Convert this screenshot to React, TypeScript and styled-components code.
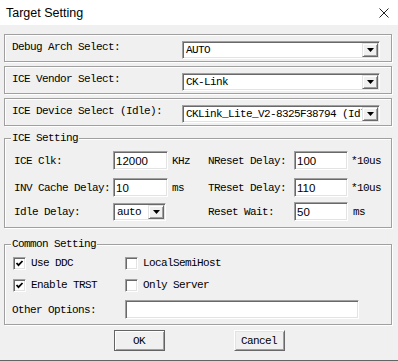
import React from 'react'
import styled, { createGlobalStyle, css } from 'styled-components'

const GlobalStyle = createGlobalStyle`
  html, body {
    margin: 0;
    padding: 0;
    background: #f0f0f0;
  }
  body {
    font-family: 'Liberation Mono', 'Noto Sans CJK SC', monospace;
    font-size: 11px;
    letter-spacing: -0.6px;
    color: #000;
  }
  * {
    box-sizing: border-box;
  }
`

const sunken = css`
  border: 1px solid;
  border-color: #a0a0a0 #fff #fff #a0a0a0;
  box-shadow: inset 1px 1px 0 #696969, inset -1px -1px 0 #e3e3e3;
  background: #fff;
`

const etched = css`
  border: 1px solid #a0a0a0;
  box-shadow: inset 1px 1px 0 #fff, 1px 1px 0 #fff;
`

const Window = styled.div`
  width: 398px;
  height: 361px;
  background: #f0f0f0;
  border-bottom: 1px solid #646464;
  display: flex;
  flex-direction: column;
  overflow: hidden;
`

const TitleBar = styled.div`
  height: 25px;
  flex: 0 0 25px;
  background: #fff;
  display: flex;
  align-items: center;
  justify-content: space-between;
  padding: 0 9px 0 6px;
`

const Title = styled.span`
  font-family: 'Liberation Sans', 'Noto Sans', sans-serif;
  font-size: 12.5px;
  letter-spacing: 0;
`

const Body = styled.div`
  padding: 9px 6px 0 4px;
  display: flex;
  flex-direction: column;
`

const SelectBox = styled.div`
  ${etched};
  height: 28px;
  margin-bottom: 4px;
  display: flex;
  align-items: flex-start;
  padding: 6px 0 0 7px;
`

const BoxLabel = styled.span`
  width: 170px;
  line-height: 13px;
  white-space: pre;
`

const Combo = styled.div<{ $width: number }>`
  ${sunken};
  width: ${p => p.$width}px;
  height: 18px;
  display: flex;
  align-items: stretch;
  padding: 1px;
`

const ComboText = styled.span`
  flex: 1;
  overflow: hidden;
  white-space: pre;
  line-height: 15px;
  padding-left: 2px;
`

const ComboButton = styled.span`
  flex: 0 0 16px;
  border: 1px solid;
  border-color: #e3e3e3 #696969 #696969 #e3e3e3;
  box-shadow: inset 1px 1px 0 #fff, inset -1px -1px 0 #a0a0a0;
  background: #f0f0f0;
  display: flex;
  align-items: center;
  justify-content: center;
`

const Group = styled.fieldset<{ $gap: number }>`
  ${etched};
  margin: ${p => p.$gap}px 0 0 0;
  padding: 0;
  min-width: 0;
`

const Legend = styled.legend`
  margin-left: 6px;
  padding: 0 1px;
  line-height: 13px;
  background: #f0f0f0;
`

const SettingGrid = styled.div`
  display: grid;
  grid-template-columns: 99px 55px 40px 86px 54px 1fr;
  grid-template-rows: 27px 24px 19px;
  margin: 6px 0 6px 9px;
`

const Cell = styled.div<{ $pad?: number }>`
  height: 19px;
  display: flex;
  align-items: center;
  padding-left: ${p => p.$pad ?? 0}px;
  white-space: pre;
`

const TextField = styled.input<{ $width?: number }>`
  ${sunken};
  width: ${p => (p.$width ? `${p.$width}px` : '100%')};
  height: 19px;
  margin: 0;
  padding: 0 0 0 2px;
  font-family: 'Liberation Sans', Arial, sans-serif;
  font-size: 11.5px;
  letter-spacing: 0;
  color: #000;
  outline: none;
`

const CheckGrid = styled.div`
  display: grid;
  grid-template-columns: 112px 1fr;
  grid-template-rows: 22px 21px 19px;
  margin: 6px 0 5px 7px;
`

const CheckItem = styled.label`
  display: flex;
  align-items: flex-start;
  gap: 5px;
  line-height: 13px;
  padding-left: 1px;
`

const CheckBox = styled.span`
  ${sunken};
  width: 13px;
  height: 13px;
  display: flex;
  align-items: center;
  justify-content: center;
`

const OptionRow = styled.div`
  grid-column: 1 / 3;
  display: flex;
  align-items: center;
`

const OptionLabel = styled.span`
  width: 113px;
`

const Buttons = styled.div`
  display: flex;
  justify-content: center;
  gap: 69px;
  margin-top: 5px;
  padding-left: 2px;
`

const Button = styled.button<{ $default?: boolean }>`
  width: 51px;
  height: 21px;
  margin: 0;
  padding: 0;
  background: #f0f0f0;
  font-family: 'Liberation Mono', monospace;
  font-size: 11px;
  letter-spacing: -0.6px;
  color: #000;
  ${p =>
    p.$default
      ? css`
          border: 1px solid #646464;
          box-shadow: inset 1px 1px 0 #fff, inset -1px -1px 0 #a0a0a0;
        `
      : css`
          border: 1px solid;
          border-color: #fff #696969 #696969 #fff;
          box-shadow: inset 1px 1px 0 #e3e3e3, inset -1px -1px 0 #a0a0a0;
        `}
`

const Arrow = () => (
  <svg width="7" height="4" viewBox="0 0 7 4">
    <path d="M0 0h7L3.5 4z" fill="#000" />
  </svg>
)

const Close = () => (
  <svg width="10" height="10" viewBox="0 0 10 10">
    <path d="M0.5 0.5L9.5 9.5M9.5 0.5L0.5 9.5" stroke="#222" strokeWidth="1" fill="none" />
  </svg>
)

const Tick = () => (
  <svg width="9" height="9" viewBox="0 0 9 9">
    <polyline points="1.5,4 3.5,6.2 7.5,2" stroke="#000" strokeWidth="1.8" fill="none" />
  </svg>
)

const ComboBox: React.FC<{ value: string; width: number }> = ({ value, width }) => (
  <Combo $width={width}>
    <ComboText>{value}</ComboText>
    <ComboButton>
      <Arrow />
    </ComboButton>
  </Combo>
)

const Check: React.FC<{ label: string; checked?: boolean }> = ({ label, checked }) => (
  <CheckItem>
    <CheckBox>{checked && <Tick />}</CheckBox>
    <span>{label}</span>
  </CheckItem>
)

const selects = [
  { label: 'Debug Arch Select:', value: 'AUTO' },
  { label: 'ICE Vendor Select:', value: 'CK-Link' },
  { label: 'ICE Device Select (Idle):', value: 'CKLink_Lite_V2-8325F38794 (Idle)' },
]

export default function App() {
  return (
    <>
      <GlobalStyle />
      <Window>
        <TitleBar>
          <Title>Target Setting</Title>
          <Close />
        </TitleBar>
        <Body>
          {selects.map(s => (
            <SelectBox key={s.label}>
              <BoxLabel>{s.label}</BoxLabel>
              <ComboBox value={s.value} width={198} />
            </SelectBox>
          ))}

          <Group $gap={2}>
            <Legend>ICE Setting</Legend>
            <SettingGrid>
              <Cell>ICE Clk:</Cell>
              <Cell><TextField defaultValue="12000" readOnly /></Cell>
              <Cell $pad={4}>KHz</Cell>
              <Cell>NReset Delay:</Cell>
              <Cell><TextField defaultValue="100" readOnly /></Cell>
              <Cell $pad={3}>*10us</Cell>

              <Cell>INV Cache Delay:</Cell>
              <Cell><TextField defaultValue="10" readOnly /></Cell>
              <Cell $pad={4}>ms</Cell>
              <Cell>TReset Delay:</Cell>
              <Cell><TextField defaultValue="110" readOnly /></Cell>
              <Cell $pad={3}>*10us</Cell>

              <Cell>Idle Delay:</Cell>
              <Cell><ComboBox value="auto" width={53} /></Cell>
              <Cell />
              <Cell>Reset Wait:</Cell>
              <Cell><TextField defaultValue="50" readOnly /></Cell>
              <Cell $pad={5}>ms</Cell>
            </SettingGrid>
          </Group>

          <Group $gap={10}>
            <Legend>Common Setting</Legend>
            <CheckGrid>
              <Check label="Use DDC" checked />
              <Check label="LocalSemiHost" />
              <Check label="Enable TRST" checked />
              <Check label="Only Server" />
              <OptionRow>
                <OptionLabel>Other Options:</OptionLabel>
                <TextField $width={234} readOnly />
              </OptionRow>
            </CheckGrid>
          </Group>

          <Buttons>
            <Button $default>OK</Button>
            <Button>Cancel</Button>
          </Buttons>
        </Body>
      </Window>
    </>
  )
}
